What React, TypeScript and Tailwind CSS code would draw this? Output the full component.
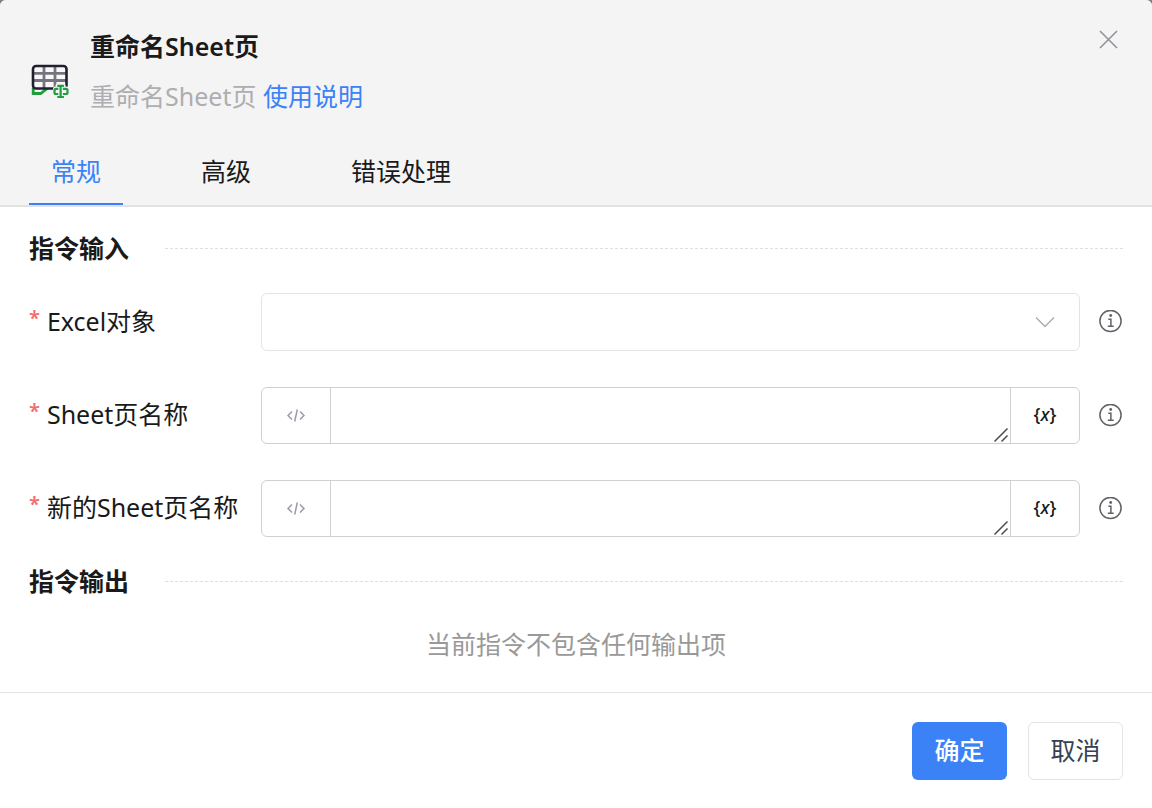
import { useState } from 'react'

const tabs = ['常规', '高级', '错误处理']

const focusRing = 'outline-none focus-visible:ring-2 focus-visible:ring-blue-300'

function SheetIcon() {
  return (
    <svg className="mt-5 h-[42px] w-[46px] shrink-0" viewBox="0 0 46 42" fill="none" aria-hidden="true">
      <path d="M5.200 28v5.500h7.500l7-5.500" stroke="#1f9d3f" strokeWidth="2.800" />
      <rect x="5" y="6" width="33.500" height="22.500" rx="3" fill="#f8f8f8" />
      <path d="M16 6v22.500M27 6v22.500M5 13.300h33.500M5 20.500h33.500" stroke="#76747f" strokeWidth="2.800" />
      <rect x="5" y="6" width="33.500" height="22.500" rx="3" stroke="#211f30" strokeWidth="2.600" />
      <path
        d="M30 26h5v11h-5zM27.500 29h11v5h-11z"
        fill="#f4f4f4"
        stroke="#f4f4f4"
        strokeWidth="5"
        strokeLinejoin="round"
      />
      <path d="M29.300 25.800h6.600M29.300 37h6.600M32.600 25v12.500" stroke="#1f9d3f" strokeWidth="2.200" />
      <path
        d="M30.300 28.800h-2.300a1.500 1.500 0 0 0-1.500 1.500v2.200a1.500 1.500 0 0 0 1.500 1.500h2.300M34.900 28.800h3.100a1.500 1.500 0 0 1 1.500 1.500v2.200a1.500 1.500 0 0 1-1.500 1.500h-3.100"
        stroke="#1f9d3f"
        strokeWidth="2.200"
      />
    </svg>
  )
}

function InfoButton({ label }: { label: string }) {
  return (
    <button type="button" aria-label={label} className={`shrink-0 rounded-full text-[#606266] ${focusRing}`}>
      <svg className="size-6" viewBox="0 0 24 24" fill="none" stroke="currentColor" strokeWidth="1.500">
        <circle cx="11.500" cy="11" r="10.600" />
        <path d="M9.300 9.300h2.600v6.800M8.800 16.300h5.900" />
        <circle cx="11.700" cy="5.500" r="1.400" fill="currentColor" stroke="none" />
      </svg>
    </button>
  )
}

function SectionTitle({ children }: { children: string }) {
  return (
    <div className="flex items-center gap-9">
      <h2 className="font-bold leading-9">{children}</h2>
      <div className="flex-1 border-t border-dashed border-[#dcdfe6]" />
    </div>
  )
}

function FieldLabel({ htmlFor, children }: { htmlFor: string; children: string }) {
  return (
    <label htmlFor={htmlFor} className="flex w-[232px] shrink-0 gap-[7px] pb-[3px] whitespace-nowrap leading-9">
      <span className="text-xl leading-[30px] font-semibold text-[#f56c6c]">*</span>
      {children}
    </label>
  )
}

function SelectField({ id, label }: { id: string; label: string }) {
  return (
    <div className="flex items-center">
      <FieldLabel htmlFor={id}>{label}</FieldLabel>
      <div className="relative mr-[19px] min-w-0 flex-1">
        <select
          id={id}
          className={`block h-[58px] w-full appearance-none rounded-md border border-[#e4e4e7] bg-white px-5 pr-16 ${focusRing}`}
        >
          <option value=""></option>
        </select>
        <svg
          className="pointer-events-none absolute top-5 right-[25px] h-[18px] w-5"
          viewBox="0 0 20 18"
          fill="none"
          stroke="#a8abb2"
          strokeWidth="1.400"
          aria-hidden="true"
        >
          <path d="M1 4.500l9 9 9-9" />
        </svg>
      </div>
      <InfoButton label={`${label}说明`} />
    </div>
  )
}

function ExpressionField({ id, label }: { id: string; label: string }) {
  return (
    <div className="flex items-center">
      <FieldLabel htmlFor={id}>{label}</FieldLabel>
      <div className="mr-[19px] flex h-[57px] min-w-0 flex-1 rounded-md border border-[#d0d0d2]">
        <button
          type="button"
          aria-label="切换表达式"
          className={`flex w-[69px] shrink-0 items-center justify-center border-r border-[#d0d0d2] ${focusRing}`}
        >
          <svg className="h-4 w-5" viewBox="0 0 20 16" fill="none" stroke="#9a9ca5" strokeWidth="1.500">
            <path d="M6 3.500L2 7.500l4 4M14 3.500l4 4-4 4M11.300 1.500l-2.600 12" />
          </svg>
        </button>
        <div className="relative min-w-0 flex-1">
          <textarea id={id} className={`block h-full w-full resize-none px-4 py-2 leading-9 ${focusRing}`} />
          <svg
            className="pointer-events-none absolute right-px bottom-0 size-4"
            viewBox="0 0 16 16"
            fill="none"
            stroke="#4b4b4b"
            strokeWidth="1.500"
            aria-hidden="true"
          >
            <path d="M1.500 14.500l13-13M8.500 14.500l6-6" />
          </svg>
        </div>
        <button
          type="button"
          aria-label="插入变量"
          className={`w-[69px] shrink-0 border-l border-[#d0d0d2] pb-1 text-lg font-medium ${focusRing}`}
        >
          {'{'}
          <i>x</i>
          {'}'}
        </button>
      </div>
      <InfoButton label={`${label}说明`} />
    </div>
  )
}

export default function App() {
  const [active, setActive] = useState(tabs[0])

  return (
    <div className="min-h-screen bg-[#808080] font-['Noto_Sans','Noto_Sans_CJK_SC',sans-serif] text-[25px] text-[#1a1a1a]">
      <div role="dialog" aria-labelledby="dialog-title" className="min-h-screen overflow-hidden rounded-t-md bg-white">
        <header className="border-b-2 border-[#e3e3e4] bg-[#f4f4f4]">
          <div className="flex items-start px-7 pt-7">
            <div className="flex flex-1 items-center gap-4">
              <SheetIcon />
              <div>
                <h1 id="dialog-title" className="mb-3.5 font-semibold leading-9">重命名Sheet页</h1>
                <p className="leading-9 text-[#adadb2]">
                  重命名Sheet页{' '}
                  <a href="#help" className="text-[#3b82f6]">使用说明</a>
                </p>
              </div>
            </div>
            <button type="button" aria-label="关闭" className={`mr-1 text-[#909399] ${focusRing}`}>
              <svg className="size-[22px]" viewBox="0 0 22 22" fill="none" stroke="currentColor" strokeWidth="1.600">
                <path d="M2 3l17 17M19 3l-17 17" />
              </svg>
            </button>
          </div>
          <div role="tablist" className="mt-[39px] flex gap-14 px-[29px]">
            {tabs.map((tab) => (
              <button
                key={tab}
                type="button"
                role="tab"
                aria-selected={tab === active}
                onClick={() => setActive(tab)}
                className={`border-b-2 px-[22px] pb-3.5 leading-9 outline-none ${
                  tab === active ? 'border-[#3b82f6] text-[#3b82f6]' : 'border-transparent'
                }`}
              >
                {tab}
              </button>
            ))}
          </div>
        </header>

        <main className="border-b border-[#e4e4e7] px-[29px] pt-[23px] pb-[30px]">
          <SectionTitle>指令输入</SectionTitle>
          <div className="mt-[27px] mb-[26px] flex flex-col gap-9">
            <SelectField id="excel-object" label="Excel对象" />
            <ExpressionField id="sheet-name" label="Sheet页名称" />
            <ExpressionField id="new-sheet-name" label="新的Sheet页名称" />
          </div>
          <SectionTitle>指令输出</SectionTitle>
          <p className="mt-[27px] text-center leading-9 text-[#999]">当前指令不包含任何输出项</p>
        </main>

        <footer className="flex justify-end gap-[21px] px-[29px] pt-[29px] pb-7">
          <button type="button" className={`h-[58px] w-[95px] rounded-md bg-[#3b82f6] font-medium text-white ${focusRing}`}>
            确定
          </button>
          <button
            type="button"
            className={`h-[58px] w-[95px] rounded-md border border-[#e4e4e7] bg-white text-[#374151] ${focusRing}`}
          >
            取消
          </button>
        </footer>
      </div>
    </div>
  )
}
